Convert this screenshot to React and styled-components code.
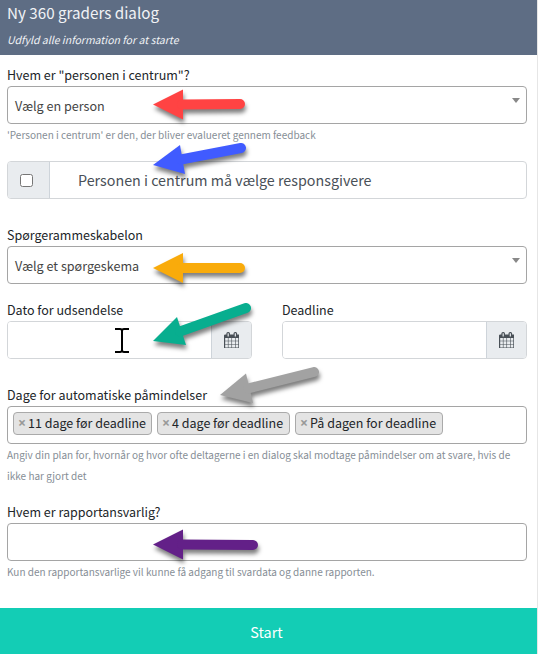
import styled, { createGlobalStyle } from "styled-components";

const reminders = [
	{ label: "11 dage før deadline", width: 139 },
	{ label: "4 dage før deadline", width: 133 },
	{ label: "På dagen for deadline", width: 148 },
];

const arrows = [
	{ color: "#ff4343", head: "153,104.5 183,89.5 183,119.5", from: [182, 104.5], to: [240, 104] },
	{ color: "#405bff", head: "153,165 180,145 185,174", from: [181, 159.5], to: [241, 148] },
	{ color: "#f9ab0b", head: "153,268 183,253 183,283", from: [182, 268], to: [240, 268] },
	{ color: "#08ae8f", head: "153,341 177,317 186,345", from: [180, 331.5], to: [246, 308] },
	{ color: "#a2a2a2", head: "220,395 246,373.5 253,403", from: [248, 388.5], to: [314, 372] },
	{ color: "#632088", head: "153,544.5 183,529.5 183,559.5", from: [182, 544.5], to: [253, 545] },
];

function CalendarIcon() {
	return (
		<svg width="15.5" height="16.7" viewBox="0 0 1664 1792" fill="#495057">
			<path d="M128 1664h288v-288h-288v288zm352 0h320v-288h-320v288zm-352-352h288v-320h-288v320zm352 0h320v-320h-320v320zm-352-384h288v-288h-288v288zm736 736h320v-288h-320v288zm-384-736h320v-288h-320v288zm768 736h288v-288h-288v288zm-384-352h320v-320h-320v320zm-352-864v-288q0-13-9.5-22.5t-22.5-9.5h-64q-13 0-22.5 9.5t-9.5 22.5v288q0 13 9.5 22.5t22.5 9.5h64q13 0 22.5-9.5t9.5-22.5zm736 864h288v-320h-288v320zm-384-384h320v-288h-320v288zm384 0h288v-288h-288v288zm32-480v-288q0-13-9.5-22.5t-22.5-9.5h-64q-13 0-22.5 9.5t-9.5 22.5v288q0 13 9.5 22.5t22.5 9.5h64q13 0 22.5-9.5t9.5-22.5zm384-64v1280q0 52-38 90t-90 38h-1408q-52 0-90-38t-38-90v-1280q0-52 38-90t90-38h128v-96q0-66 47-113t113-47h64q66 0 113 47t47 113v96h384v-96q0-66 47-113t113-47h64q66 0 113 47t47 113v96h128q52 0 90 38t38 90z" />
		</svg>
	);
}

function DateField({ label }) {
	return (
		<div>
			<Label>{label}</Label>
			<InputGroup>
				<DateInput />
				<Addon $side="right">
					<CalendarIcon />
				</Addon>
			</InputGroup>
		</div>
	);
}

function App() {
	return (
		<Dialog>
			<GlobalStyle />

			{/* HEADER */}
			<Header>
				<Title>Ny 360 graders dialog</Title>
				<Subtitle>Udfyld alle information for at starte</Subtitle>
			</Header>

			{/* FORM */}
			<Form>
				<Field $height={95}>
					<Label>Hvem er "personen i centrum"?</Label>
					<Select>
						Vælg en person
						<Caret />
					</Select>
					<Help>'Personen i centrum' er den, der bliver evalueret gennem feedback</Help>
				</Field>

				<Field $height={65}>
					<InputGroup>
						<Addon $side="left">
							<Checkbox type="checkbox" />
						</Addon>
						<CheckText>Personen i centrum må vælge responsgivere</CheckText>
					</InputGroup>
				</Field>

				<Field $height={75}>
					<Label>Spørgerammeskabelon</Label>
					<Select>
						Vælg et spørgeskema
						<Caret />
					</Select>
				</Field>

				<Dates>
					<DateField label="Dato for udsendelse" />
					<DateField label="Deadline" />
				</Dates>

				<Field $height={117}>
					<Label>Dage for automatiske påmindelser</Label>
					<TagBox>
						{reminders.map(({ label, width }) => (
							<Tag key={label} $width={width}>
								<Remove>×</Remove>
								{label}
							</Tag>
						))}
					</TagBox>
					<Help>
						Angiv din plan for, hvornår og hvor ofte deltagerne i en dialog skal modtage påmindelser om at svare, hvis de
						<br />
						ikke har gjort det
					</Help>
				</Field>

				<Field>
					<Label>Hvem er rapportansvarlig?</Label>
					<TagBox />
					<Help>Kun den rapportansvarlige vil kunne få adgang til svardata og danne rapporten.</Help>
				</Field>
			</Form>

			<StartButton>Start</StartButton>

			{/* ARROWS AND TEXT CURSOR */}
			<Overlay viewBox="0 0 538 654">
				{arrows.map(({ color, head, from, to }) => (
					<Arrow key={color}>
						<polygon points={head} fill={color} />
						<line x1={from[0]} y1={from[1]} x2={to[0]} y2={to[1]} stroke={color} strokeWidth="10" strokeLinecap="round" />
					</Arrow>
				))}
				<path d="M115 329h5q2 0 2 2q0-2 2-2h5M122 330v21M115 352h5q2 0 2-2q0 2 2 2h5" fill="none" stroke="#000" strokeWidth="2" />
			</Overlay>
		</Dialog>
	);
}

export default App;

const GlobalStyle = createGlobalStyle`
	* {
		box-sizing: border-box;
	}

	body {
		margin: 0;
		background: white;
		font-family: "Noto Sans CJK SC", "Noto Sans", sans-serif;
		color: #212529;
		overflow: hidden;
	}
`;

const Dialog = styled.div`
	position: relative;
	display: flex;
	flex-direction: column;
	width: 538px;
	height: 654px;
	border-right: 1px solid #e6e6e6;
`;

const Header = styled.div`
	height: 55px;
	padding: 0 7px;
	background: #5e6d84;
	color: #f1f3f6;
`;

const Title = styled.div`
	font-size: 15.2px;
	line-height: 24px;
	white-space: nowrap;
`;

const Subtitle = styled.div`
	margin-top: 6px;
	font-size: 10.5px;
	font-style: italic;
	line-height: 20px;
	white-space: nowrap;
`;

const Form = styled.div`
	flex: 1;
	padding: 11px 10px 0 7px;
`;

const Field = styled.div`
	height: ${({ $height }) => ($height ? `${$height}px` : "auto")};
`;

const Label = styled.div`
	height: 20px;
	font-size: 12.5px;
	line-height: 18px;
	white-space: nowrap;
`;

const Box = styled.div`
	display: flex;
	height: 38px;
	border: 1px solid #a5a5a5;
	border-radius: 4px;
	background: white;
`;

const Select = styled(Box)`
	align-items: center;
	justify-content: space-between;
	padding: 1px 6px 0 7px;
	font-size: 12.6px;
	color: #444;
`;

const Caret = styled.span`
	margin-top: -11px;
	border: 4px solid transparent;
	border-top: 5px solid #888;
	border-bottom: 0;
`;

const Help = styled.div`
	font-size: 10.02px;
	line-height: 21px;
	color: #868e96;
	white-space: nowrap;
`;

const InputGroup = styled.div`
	display: flex;
	height: 38px;
	border: 1px solid #d3d6d9;
	border-radius: 4px;
	overflow: hidden;
`;

const Addon = styled.div`
	display: flex;
	align-items: center;
	justify-content: center;
	width: ${({ $side }) => ($side === "left" ? 42 : 40)}px;
	background: #e9ecef;
	border-${({ $side }) => ($side === "left" ? "right" : "left")}: 1px solid #ced4da;
`;

const Checkbox = styled.input`
	width: 13px;
	height: 13px;
	margin: 0 5px 0 0;
`;

const CheckText = styled.div`
	padding-left: 28px;
	font-size: 14.3px;
	line-height: 35px;
	color: #495057;
	white-space: nowrap;
`;

const Dates = styled.div`
	display: grid;
	grid-template-columns: 1fr 1fr;
	column-gap: 30px;
	height: 85px;
`;

const DateInput = styled.input`
	flex: 1;
	min-width: 0;
	border: 0;
	outline: none;
`;

const TagBox = styled(Box)`
	gap: 5px;
	padding: 5px;
`;

const Tag = styled.div`
	display: flex;
	align-items: center;
	width: ${({ $width }) => $width}px;
	height: 23px;
	padding: 0 0 2px 4px;
	border: 1px solid #aaa;
	border-radius: 4px;
	background: #e4e4e4;
	font-size: 12.5px;
	line-height: 19px;
	white-space: nowrap;
`;

const Remove = styled.span`
	width: 10px;
	color: #999;
	font-family: "Open Sans", sans-serif;
	font-size: 14px;
	font-weight: bold;
`;

const StartButton = styled.button`
	height: 46px;
	border: 0;
	padding: 1px 4px 0 0;
	background: #13cdb5;
	color: white;
	font-family: inherit;
	font-size: 14.4px;
`;

const Overlay = styled.svg`
	position: absolute;
	top: 0;
	left: 0;
	width: 538px;
	height: 654px;
	pointer-events: none;
`;

const Arrow = styled.g`
	filter: drop-shadow(1px 4px 2px rgba(0, 0, 0, 0.5));
`;
